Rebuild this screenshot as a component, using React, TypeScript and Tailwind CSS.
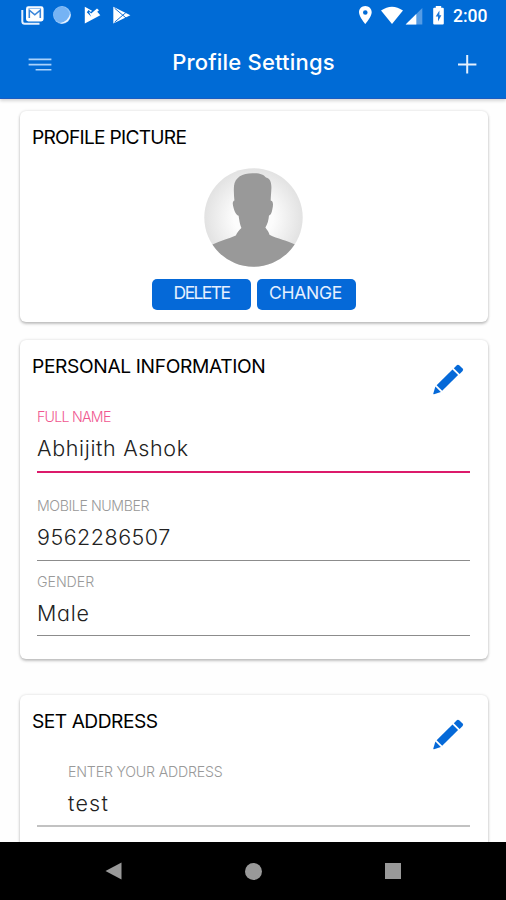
import type { ReactNode } from 'react';

function StatusBar() {
  return (
    <div className="flex h-[32px] items-start justify-between pl-[20px] pr-[18px] text-white">
      <div className="flex">
        <svg className="h-[32px] w-[26px]" viewBox="20 0 26 32" fill="none">
          <path d="M22.3 10V21.2Q22.3 23.7 24.8 23.7H39.5" stroke="#e6f1ff" strokeWidth="2" />
          <rect x="26" y="6.3" width="17.6" height="15.2" rx="2.4" fill="#fff" />
          <path d="M29.3 18V10.2L34.8 14.8L40.3 10.2V18" stroke="#3a86da" strokeWidth="1.6" />
          <path d="M28.6 8.4H41" stroke="#6aa8ea" strokeWidth="0.8" />
        </svg>
        <svg className="ml-[6px] h-[32px] w-[20px]" viewBox="52 0 20 32">
          <circle cx="62" cy="15" r="8.9" fill="#8fc3f8" />
          <circle cx="61.3" cy="14.6" r="7.8" fill="#75b3f4" />
          <path d="M70.4 13.4A8.6 8.6 0 0 1 60 23.2Q68 21.5 70.4 13.4Z" fill="#f0f7ff" />
        </svg>
        <svg className="ml-[11px] h-[32px] w-[19px]" viewBox="83 0 19 32">
          <path d="M84.8 6.8L92 10.8L90.9 12L88.6 10L86.8 12.2L91 16.4L97 11.6L100.3 15.2L84.8 23.5Z" fill="#fff" />
          <path d="M88.9 11.4L91.2 13.6L97 8.4L99 10.2L91.2 17Z" fill="#fff" />
        </svg>
        <svg className="ml-[10px] h-[32px] w-[20px]" viewBox="112 0 20 32">
          <path d="M113.3 6.8L130.4 15.2L113.3 23.5Z" fill="#fff" />
          <path d="M114.6 8.2L126.3 18.2M114.6 22.2L126.3 12.2" stroke="#1472d6" strokeWidth="1" />
        </svg>
      </div>
      <div className="flex">
        <svg className="h-[32px] w-[15px]" viewBox="358 0 15 32">
          <path
            fillRule="evenodd"
            d="M365.3 6C361.7 6 359 8.8 359 12.2C359 16.8 365.3 24 365.3 24S371.7 16.8 371.7 12.2C371.7 8.8 368.9 6 365.3 6ZM365.3 10.2A2.3 2.3 0 1 1 365.3 14.8A2.3 2.3 0 0 1 365.3 10.2Z"
            fill="#fff"
          />
        </svg>
        <svg className="ml-[7px] h-[32px] w-[24px]" viewBox="380 0 24 32">
          <path d="M381 10.5Q392 2.8 403 10.5L392 24Z" fill="#fff" />
        </svg>
        <svg className="ml-px h-[32px] w-[18px]" viewBox="405 0 18 32">
          <path d="M422.3 8V24.5H405.6Z" fill="#559ce5" />
          <path d="M416.3 14V24.5H405.6Z" fill="#fff" />
        </svg>
        <svg className="ml-[9px] h-[32px] w-[14px]" viewBox="432 0 14 32">
          <path d="M435.8 7.8V6H441.2V7.8H442.8Q443.8 7.8 443.8 8.8V23.5Q443.8 24.5 442.8 24.5H434.2Q433.2 24.5 433.2 23.5V8.8Q433.2 7.8 434.2 7.8Z" fill="#fff" />
          <path d="M439.4 10.6L435.7 16.6H438V21.4L441.4 15.2H439.4Z" fill="#1a76d9" />
        </svg>
        <span className="ml-[7px] mt-[6px] w-[35px] whitespace-nowrap font-['Roboto',sans-serif] text-[17.5px] leading-[20px] font-medium">
          2:00
        </span>
      </div>
    </div>
  );
}

function AppBar() {
  return (
    <div className="flex h-[66px] items-start justify-between pl-[28px] pr-[29px] text-white">
      <svg className="mt-[24px] h-[16px] w-[24px]" viewBox="0 0 24 16" stroke="#a9d2fb" strokeWidth="1.6">
        <path d="M0.6 3.4H23.4M0.6 8.6H23.4M7.6 13.7H23.4" />
      </svg>
      <h1 className="mt-[16px] mr-[2px] text-[22px] leading-[28px] font-medium tracking-[0.2px] whitespace-nowrap">
        Profile Settings
      </h1>
      <svg className="mt-[22px] h-[20px] w-[20px]" viewBox="0 0 20 20" stroke="#e4f0fe" strokeWidth="2">
        <path d="M1 10.4H19.4M10.2 1V19.6" />
      </svg>
    </div>
  );
}

function Pencil() {
  return (
    <svg className="mr-[24px] mt-[12px] h-[31px] w-[31px]" viewBox="0 0 31 31" fill="#0569d8">
      <path d="M19.5 5.5L25.1 11L9.2 26.8L3.6 21.3Z" />
      <path d="M20.8 4.2L23.6 1.4Q24.9 0.2 26.2 1.3L29.6 4.6Q30.8 5.8 29.6 7.1L26.6 10Z" />
      <path d="M2.4 22.5L7.9 28L1 30.3Q0.1 30.5 0.3 29.6Z" />
    </svg>
  );
}

function Card({ title, tracking, editable, className, children }: {
  title: string;
  tracking: string;
  editable?: boolean;
  className: string;
  children: ReactNode;
}) {
  return (
    <section
      className={`ml-[20px] w-[468px] shrink-0 rounded-[6px] bg-white shadow-[0_2px_3px_rgba(0,0,0,0.22),0_0_3px_rgba(0,0,0,0.14)] ${className}`}
    >
      <div className="flex h-[40px] items-start justify-between">
        <h2 className={`pl-[12px] pt-[12px] text-[19.2px] leading-[28px] whitespace-nowrap text-black ${tracking}`}>{title}</h2>
        {editable && <div className="pt-[12px]"><Pencil /></div>}
      </div>
      {children}
    </section>
  );
}

function Field({ label, value, labelClass, valueClass, className }: {
  label: string;
  value: string;
  labelClass: string;
  valueClass: string;
  className: string;
}) {
  return (
    <div className={`ml-[17px] mr-[18px] whitespace-nowrap ${className}`}>
      <div className={`text-[14.2px] leading-[20px] font-light ${labelClass}`}>{label}</div>
      <div className={`mt-[6px] text-[21.5px] leading-[30px] font-light text-[#222] ${valueClass}`}>{value}</div>
    </div>
  );
}

function Avatar() {
  return (
    <svg className="ml-[184px] mt-[17px] h-[99px] w-[99px]" viewBox="0 0 99 99">
      <defs>
        <radialGradient id="backdrop" cx="50%" cy="50%" r="50%">
          <stop offset="0.4" stopColor="#fcfcfc" />
          <stop offset="1" stopColor="#e2e2e2" />
        </radialGradient>
        <clipPath id="round">
          <circle cx="49.5" cy="49.5" r="49.2" />
        </clipPath>
      </defs>
      <g clipPath="url(#round)">
        <rect width="99" height="99" fill="url(#backdrop)" />
        <path
          d="M49.5 5.3C56 5 60 7 62 9.5C66.5 10.5 67.5 15 67.4 20C67.2 25 66.8 29 66.7 32.5C69.5 33 69.3 37 68.4 41C67.8 45 66.4 47.5 65 47.5C64.6 52 63.6 56 61.4 59.5C62.6 61.5 64.5 63 65.5 66.8C73 70.8 84 72.8 91 76.5L99 85V99H0V85L8.5 76.5C16 72.8 25 70.8 31.8 67.5C33.2 64.4 35.4 62 37.4 60C35.8 56 35.2 52 34.6 47.8C31.5 47 29.5 41 28.8 36C28.6 33.8 29.5 32.6 30.4 32.4C30 28 29.6 23 30 18C31 9 39 5 49.5 5.3Z"
          fill="#999"
        />
      </g>
    </svg>
  );
}

export default function App() {
  return (
    <div className="flex h-[900px] w-[506px] flex-col overflow-hidden bg-[#fefefe] font-['Inter','Open_Sans',sans-serif] [font-feature-settings:'cv11']">
      <header className="z-10 h-[99px] shrink-0 border-b border-[#1a5cc2] bg-[#006bd6] shadow-[0_2px_3px_rgba(0,0,0,0.16)]">
        <StatusBar />
        <AppBar />
      </header>

      <main className="flex h-[743px] shrink-0 flex-col overflow-hidden">
        <Card title="PROFILE PICTURE" tracking="tracking-[-0.75px]" className="mt-[12px] h-[211px]">
          <Avatar />
          <div className="mt-[12px] flex justify-center gap-[6px] text-[17.5px] leading-[28px] text-[#e6f0ff]">
            <button className="h-[31px] w-[99px] rounded-[5px] bg-[#0569d8] pb-[3px] tracking-[-1.6px]">DELETE</button>
            <button className="h-[31px] w-[99px] rounded-[5px] bg-[#0569d8] pr-[2px] pb-[3px] tracking-[-0.3px]">CHANGE</button>
          </div>
        </Card>

        <Card title="PERSONAL INFORMATION" tracking="tracking-[-0.36px]" editable className="mt-[18px] h-[319px]">
          <Field
            label="FULL NAME"
            value="Abhijith Ashok"
            labelClass="text-[#f0578f] tracking-[-0.75px]"
            valueClass="tracking-[0.65px]"
            className="mt-[27px] h-[66px] border-b-2 border-[#dc1a6b]"
          />
          <Field
            label="MOBILE NUMBER"
            value="9562286507"
            labelClass="text-[#999] tracking-[-0.42px]"
            valueClass="tracking-[0.5px]"
            className="mt-[23px] h-[65px] border-b border-[#8c8c8c]"
          />
          <Field
            label="GENDER"
            value="Male"
            labelClass="text-[#999] tracking-[-0.05px]"
            valueClass="tracking-[0.7px]"
            className="mt-[11px] h-[64px] border-b border-[#8c8c8c]"
          />
        </Card>

        <Card title="SET ADDRESS" tracking="tracking-[-0.5px]" editable className="mt-[36px] h-[200px]">
          <Field
            label="ENTER YOUR ADDRESS"
            value="test"
            labelClass="text-[#999] tracking-[-0.2px]"
            valueClass="tracking-[1.2px]"
            className="mt-[27px] h-[65px] border-b-2 border-[#c2c2c2] pl-[31px]"
          />
        </Card>
      </main>

      <nav className="flex h-[58px] shrink-0 items-center justify-between bg-black pl-[105px] pr-[105px]">
        <svg className="h-[18px] w-[17px]" viewBox="0 0 17 18">
          <path d="M16.5 0.5V17.5L0.5 9Z" fill="#999" />
        </svg>
        <div className="mr-px h-[17px] w-[17px] rounded-full bg-[#999]" />
        <div className="h-[16px] w-[16px] bg-[#999]" />
      </nav>
    </div>
  );
}
